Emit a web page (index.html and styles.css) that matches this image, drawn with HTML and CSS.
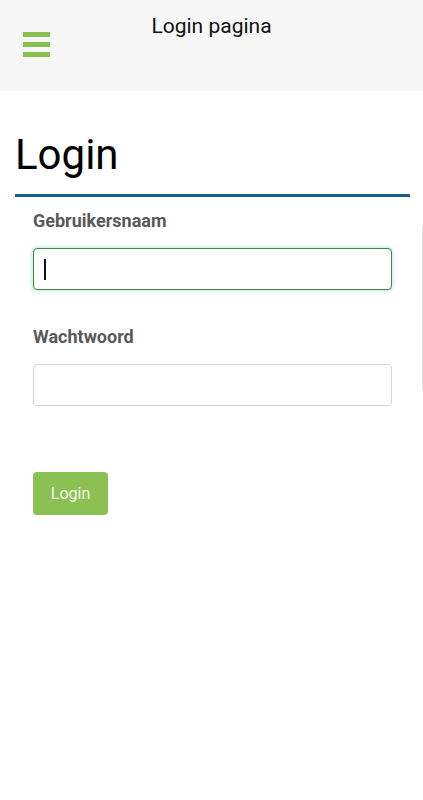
FILE: index.html
```html
<!DOCTYPE html>
<html lang="nl">
<head>
<meta charset="utf-8">
<title>Login pagina</title>
<link rel="stylesheet" href="styles.css">
</head>
<body>
<header class="topbar">
  <div class="hamburger" aria-label="menu">
    <span></span><span></span><span></span>
  </div>
  <div class="title">Login pagina</div>
</header>
<main class="content">
  <h1 class="heading">Login</h1>
  <form class="form">
    <label class="label" for="user">Gebruikersnaam</label>
    <div class="input focused" id="user"><span class="caret"></span></div>
    <label class="label label-pw" for="pw">Wachtwoord</label>
    <div class="input" id="pw"></div>
    <button type="button" class="btn">Login</button>
  </form>
</main>
<div class="scrolltrack"></div>
</body>
</html>
```
FILE: styles.css
```css
html, body {
  margin: 0;
  padding: 0;
  background: #ffffff;
  font-family: Roboto, "Liberation Sans", Arial, sans-serif;
}
.topbar {
  position: relative;
  height: 91px;
  background: #f7f7f7;
}
.hamburger {
  position: absolute;
  left: 23px;
  top: 32px;
  width: 27px;
  display: flex;
  flex-direction: column;
  gap: 5px;
}
.hamburger span {
  display: block;
  height: 5px;
  background: #89c04f;
}
.title {
  padding-top: 14px;
  text-align: center;
  font-size: 21px;
  line-height: 25px;
  color: #111;
}
.content {
  padding: 39px 13px 0 15px;
}
.heading {
  margin: 0;
  font-size: 42px;
  font-weight: 400;
  line-height: 49px;
  color: #000;
  padding-bottom: 15px;
  border-bottom: 3px solid #185f8d;
}
.form {
  display: flex;
  flex-direction: column;
  align-items: flex-start;
  padding: 13px 18px 0 18px;
}
.label {
  font-size: 18px;
  font-weight: 700;
  line-height: 21px;
  color: #595959;
}
.label-pw {
  margin-top: 36px;
}
.input {
  box-sizing: border-box;
  margin-top: 17px;
  width: 359px;
  height: 42px;
  border: 1px solid #d6d6d6;
  border-radius: 4px;
  background: #fff;
  display: flex;
  align-items: center;
  padding-left: 10px;
}
.input.focused {
  border-color: #3e8a47;
  box-shadow: 0 0 4px 1px rgba(120, 200, 190, 0.45);
}
.caret {
  display: block;
  width: 2px;
  height: 21px;
  background: #111;
}
.btn {
  margin-top: 66px;
  width: 75px;
  height: 43px;
  border: none;
  border-radius: 4px;
  background: #8bc152;
  color: #f4faee;
  font-family: Roboto, "Liberation Sans", Arial, sans-serif;
  font-size: 16px;
  padding: 0;
}
.scrolltrack {
  position: absolute;
  right: 0;
  top: 226px;
  width: 1px;
  height: 164px;
  background: #e4e4e4;
}
```
